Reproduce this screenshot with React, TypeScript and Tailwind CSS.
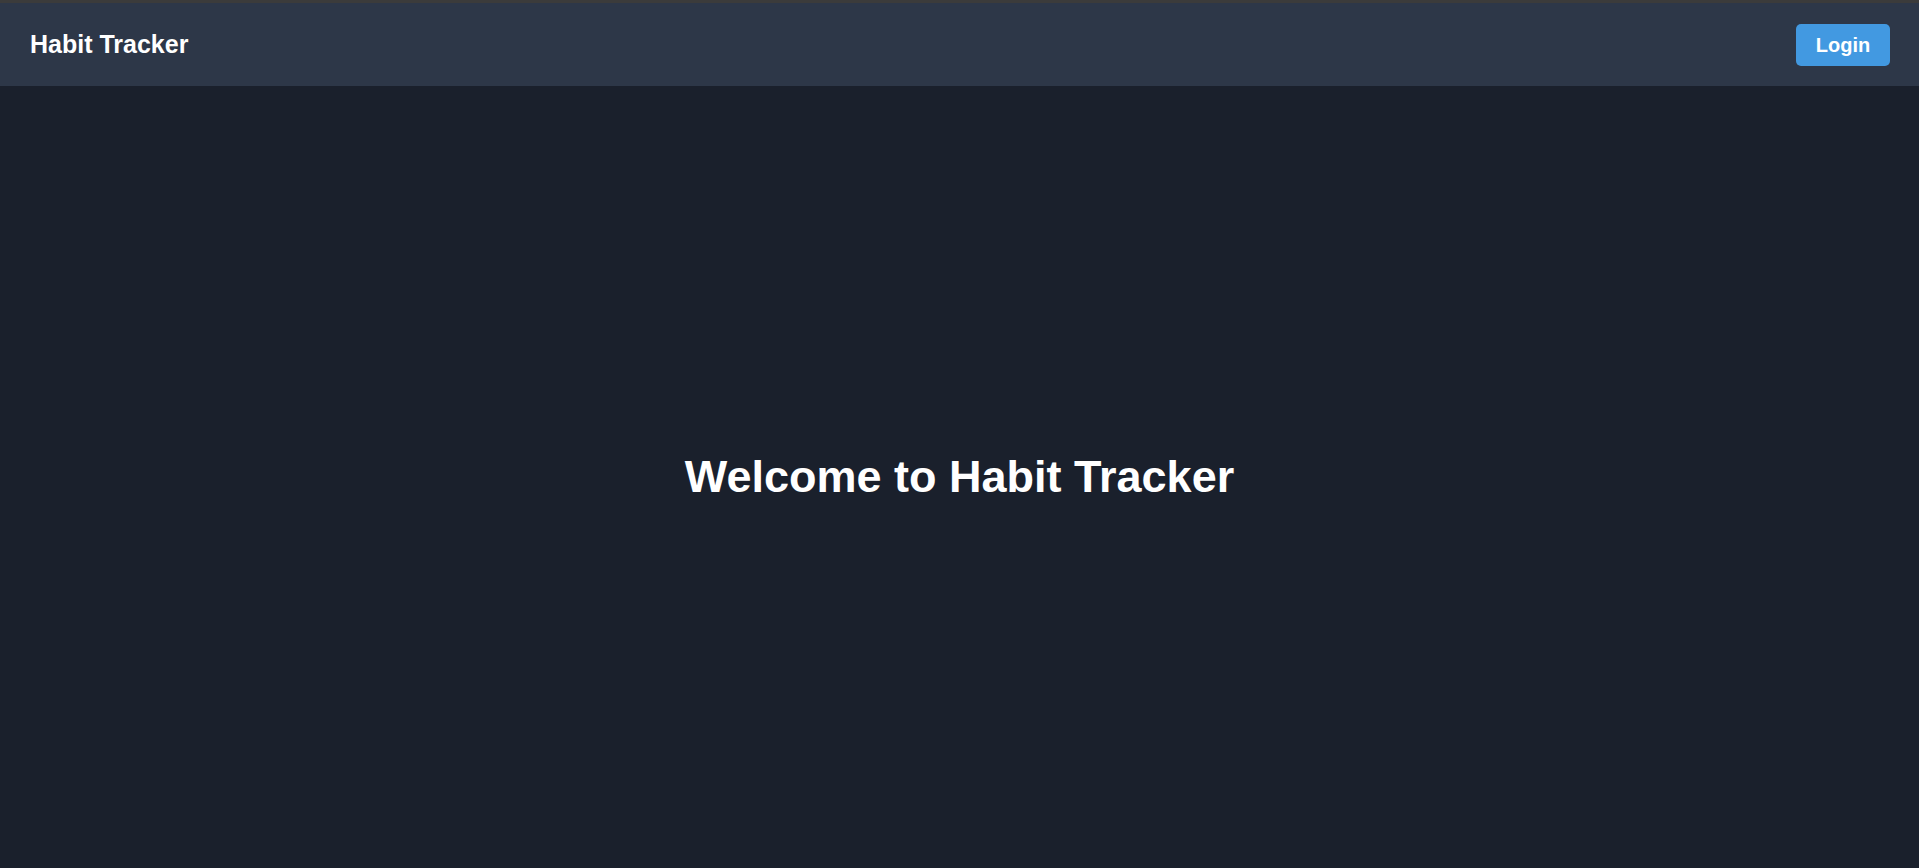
export default function App() {
  return (
    <div className="flex h-[868px] flex-col bg-[#1a202c] font-['Liberation_Sans',Arial,sans-serif] text-white">
      <div className="h-[3px] bg-[#3b3b3b]" />
      <header className="flex h-[83px] items-center justify-between bg-[#2d3748] pl-[30px] pr-[29px]">
        <h1 className="text-[25px] font-bold">Habit Tracker</h1>
        <button className="h-[42px] w-[94px] rounded-[5px] bg-[#4299e1] text-[20px] font-bold">
          Login
        </button>
      </header>
      <main className="flex flex-1 items-center justify-center">
        <h2 className="text-[45px] font-bold">Welcome to Habit Tracker</h2>
      </main>
    </div>
  );
}
